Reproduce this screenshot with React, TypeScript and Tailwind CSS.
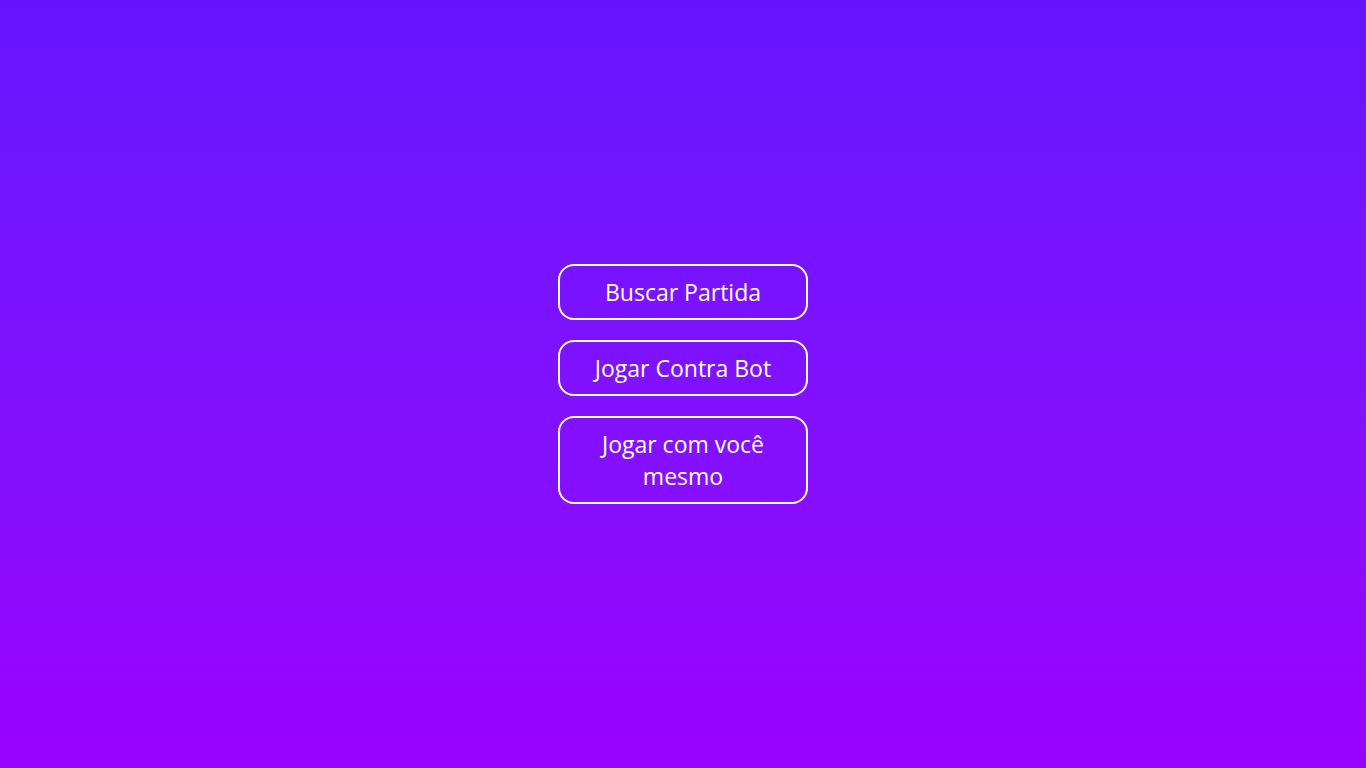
import React from 'react';

const options = ['Buscar Partida', 'Jogar Contra Bot', 'Jogar com você mesmo'];

export default function App() {
  return (
    <div className="flex h-screen w-full items-center justify-center bg-gradient-to-b from-[#6614ff] to-[#9900ff] font-['Open_Sans','Noto_Sans',sans-serif]">
      <div className="flex flex-col gap-5">
        {options.map((label) => (
          <button
            key={label}
            className="w-[250px] rounded-2xl border-2 border-white px-5 py-[10px] text-[23px] leading-8 text-white"
          >
            {label}
          </button>
        ))}
      </div>
    </div>
  );
}
